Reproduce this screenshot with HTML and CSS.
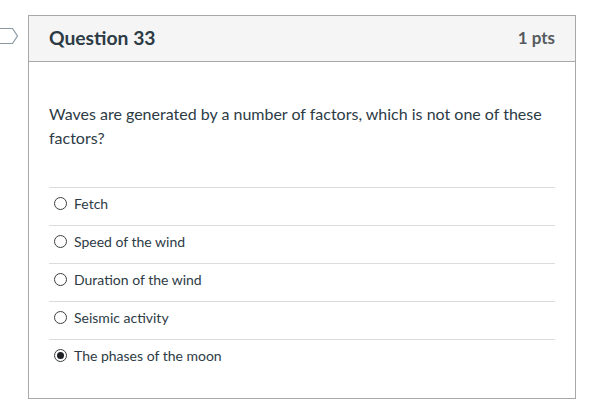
FILE: index.html
```html
<!DOCTYPE html>
<html>
<head>
<meta charset="utf-8">
<link rel="stylesheet" href="styles.css">
</head>
<body>
<div class="page">
  <svg class="flag" width="20" height="18" viewBox="0 0 20 18"><path d="M-2 1.5 H12.5 L17.5 9 L12.5 16.5 H-2" fill="none" stroke="#8b99a3" stroke-width="1.2"/></svg>
  <div class="card">
    <div class="header">
      <h2 class="title">Question 33</h2>
      <span class="pts">1 pts</span>
    </div>
    <div class="body">
      <p class="question">Waves are generated by a number of factors, which is not one of these factors?</p>
      <div class="answers">
        <label class="answer"><span class="radio"></span><span>Fetch</span></label>
        <label class="answer"><span class="radio"></span><span>Speed of the wind</span></label>
        <label class="answer"><span class="radio"></span><span>Duration of the wind</span></label>
        <label class="answer"><span class="radio"></span><span>Seismic activity</span></label>
        <label class="answer"><span class="radio checked"></span><span>The phases of the moon</span></label>
      </div>
    </div>
  </div>
</div>
</body>
</html>
```

FILE: styles.css
```css
html, body {
  margin: 0;
  padding: 0;
  background: #fff;
}
body {
  font-family: Lato, "Liberation Sans", sans-serif;
  color: #2d3b45;
}
.page {
  position: relative;
  padding: 15px 0 0 28px;
  width: 548px;
}
.flag {
  position: absolute;
  left: 0;
  top: 27px;
}
.card {
  border: 1px solid #a8a8a8;
  background: #fff;
}
.header {
  display: flex;
  justify-content: space-between;
  align-items: center;
  height: 42px;
  padding: 0 20px 3px 20px;
  background: #f5f5f5;
  border-bottom: 1px solid #a8a8a8;
}
.title {
  margin: 0;
  font-size: 19.3px;
  font-weight: 700;
  color: #2d3b45;
}
.pts {
  font-size: 17px;
  font-weight: 700;
  color: #555a5e;
}
.body {
  padding: 40px 20px 21px 20px;
}
.question {
  margin: 0 0 37px 0;
  font-size: 16px;
  line-height: 24px;
}
.answers {
  display: flex;
  flex-direction: column;
}
.answer {
  display: flex;
  align-items: center;
  gap: 7px;
  height: 30px;
  padding: 0 0 7px 5px;
  border-top: 1px solid #dcdcdc;
  font-size: 14px;
  color: #2d3b45;
}
.radio {
  width: 11px;
  height: 11px;
  border: 1px solid #3b3f42;
  border-radius: 50%;
  position: relative;
  box-sizing: content-box;
}
.radio.checked::after {
  content: "";
  position: absolute;
  left: 2px;
  top: 2px;
  width: 7px;
  height: 7px;
  border-radius: 50%;
  background: #1e2124;
}
```
